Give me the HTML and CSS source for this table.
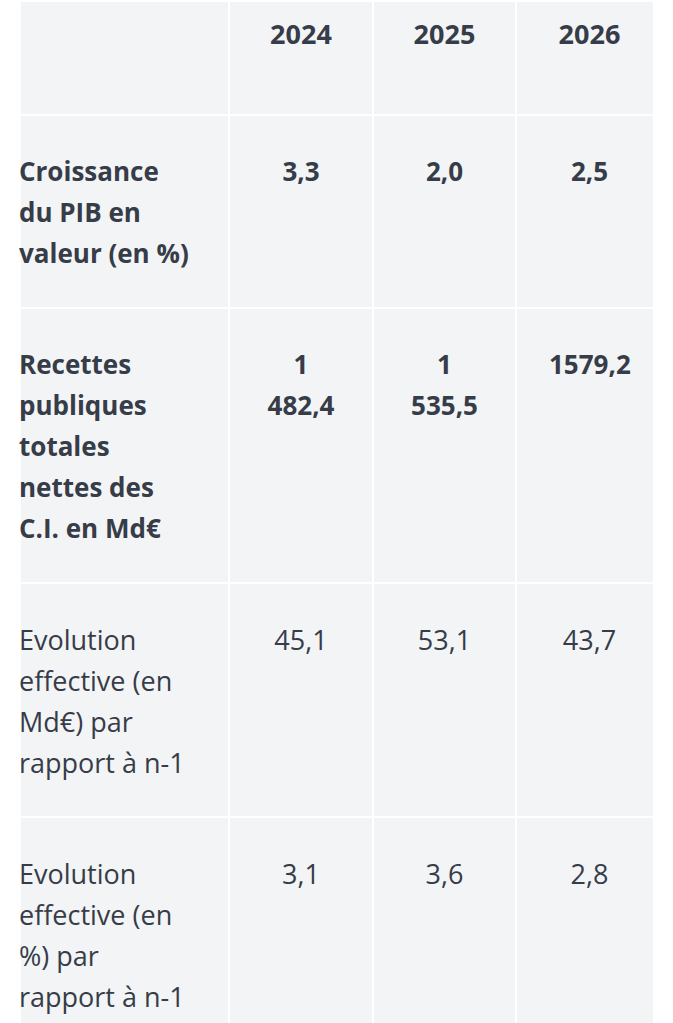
FILE: index.html
```html
<!DOCTYPE html>
<html lang="fr">
<head>
<meta charset="utf-8">
<title>Recettes publiques</title>
<link rel="stylesheet" href="styles.css">
</head>
<body>
<div class="table-wrap">
  <table class="data">
    <colgroup>
      <col class="c-label">
      <col class="c-y1">
      <col class="c-y2">
      <col class="c-y3">
    </colgroup>
    <thead>
      <tr>
        <th class="label"></th>
        <th>2024</th>
        <th>2025</th>
        <th>2026</th>
      </tr>
    </thead>
    <tbody>
      <tr class="strong">
        <th class="label"><span class="label-text">Croissance du PIB en valeur (en&nbsp;%)</span></th>
        <td>3,3</td>
        <td>2,0</td>
        <td>2,5</td>
      </tr>
      <tr class="strong">
        <th class="label"><span class="label-text">Recettes publiques totales nettes des C.I. en Md€</span></th>
        <td>1 482,4</td>
        <td>1 535,5</td>
        <td>1579,2</td>
      </tr>
      <tr>
        <th class="label"><span class="label-text">Evolution effective (en Md€) par rapport&nbsp;à&nbsp;n-1</span></th>
        <td>45,1</td>
        <td>53,1</td>
        <td>43,7</td>
      </tr>
      <tr>
        <th class="label"><span class="label-text">Evolution effective (en %) par rapport&nbsp;à&nbsp;n-1</span></th>
        <td>3,1</td>
        <td>3,6</td>
        <td>2,8</td>
      </tr>
    </tbody>
  </table>
</div>
</body>
</html>
```
FILE: styles.css
```css
html, body {
  margin: 0;
  padding: 0;
  background: #ffffff;
}

body {
  font-family: "Open Sans", "Noto Sans", sans-serif;
  font-size: 27px;
  line-height: 41px;
  color: #363c48;
}

.table-wrap {
  margin-left: 19px;
  width: 634px;
  overflow: hidden;
}

.data {
  table-layout: fixed;
  width: 645px;
  border-collapse: separate;
  border-spacing: 2px;
  background: #ffffff;
}

.c-label { width: 207px; }
.c-y1 { width: 142px; }
.c-y2 { width: 141px; }
.c-y3 { width: 145px; }

.data th,
.data td {
  background: #f3f4f6;
  padding: 35px 32px 33px;
  text-align: center;
  vertical-align: top;
  font-weight: 400;
}

.data thead th {
  padding-top: 11px;
  padding-bottom: 60px;
  font-weight: 700;
}

.data th.label {
  text-align: left;
  padding-left: 0;
  padding-right: 37px;
}

.label-text {
  display: block;
  margin-left: -2px;
}

.data tr.strong th,
.data tr.strong td {
  font-weight: 700;
  font-size: 26px;
}
```
